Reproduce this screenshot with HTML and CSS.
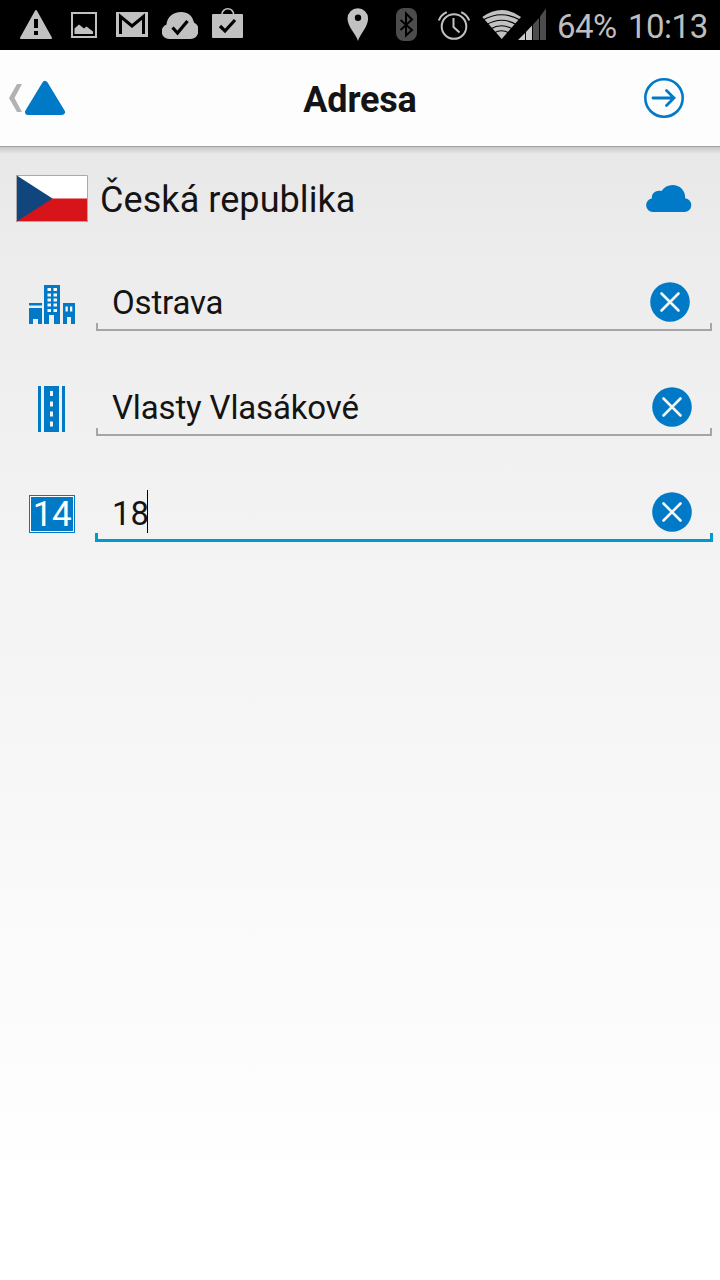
FILE: index.html
```html
<!DOCTYPE html>
<html lang="cs">
  <head>
    <meta charset="UTF-8" />
    <meta name="viewport" content="width=device-width, initial-scale=1.0" />
    <title>Adresa</title>
    <link rel="stylesheet" href="styles.css">
  </head>
  <body>
    <main class="app">
      <div class="status-bar">
        <div class="notifications">
          <svg width="32" height="50" viewBox="20 0 32 50">
            <path d="M36 11L51 38H21z" fill="#c1c1c1" stroke="#c1c1c1" stroke-width="2" stroke-linejoin="round" />
            <path d="M34 19h4v9h-4zM34 31h4v4h-4z" fill="#000" />
          </svg>
          <svg width="26" height="50" viewBox="71 0 26 50">
            <path d="M72 13h24v24H72z" fill="none" stroke="#c1c1c1" stroke-width="2" />
            <path d="M74.500 34v-5.500l4.500-4 5 4 2.500-2 6.500 5V34z" fill="#c1c1c1" />
          </svg>
          <svg width="32" height="50" viewBox="116 0 32 50">
            <path d="M116 12h32v25h-32z" fill="#c1c1c1" />
            <path d="M120.500 34V16.500L132 26l11.500-9.500V34" fill="none" stroke="#000" stroke-width="3" />
          </svg>
          <svg width="36" height="50" viewBox="162 0 36 50">
            <path d="M169 39a7.500 7.500 0 0 1-2.500-14.500C167 17 173 12 181 12c7 0 11.500 4 13 10.500a8.800 8.800 0 0 1-3.500 16.500z" fill="#c1c1c1" />
            <path d="M172.500 27.500l5 5.500 10-12" fill="none" stroke="#000" stroke-width="3.200" />
          </svg>
          <svg width="31" height="50" viewBox="212 0 31 50">
            <path d="M222 16v-1.500a5.800 5.800 0 0 1 11.600 0V16" fill="none" stroke="#c1c1c1" stroke-width="1.600" />
            <rect x="212" y="14" width="31" height="24" rx="1" fill="#c1c1c1" />
            <path d="M220 26l5 5 10-11" fill="none" stroke="#000" stroke-width="3.200" />
          </svg>
        </div>
        <div class="indicators">
          <svg width="22" height="50" viewBox="347 0 22 50">
            <path fill-rule="evenodd" d="M358 41C356 34 347.500 27 347.500 18.500a10.300 10.300 0 0 1 20.600 0C368.100 27 360 34 358 41zM358 14.500a3.200 3.200 0 1 0 0 6.400 3.200 3.200 0 0 0 0-6.400z" fill="#c1c1c1" />
          </svg>
          <svg width="21" height="50" viewBox="396 0 21 50">
            <rect x="396" y="8" width="21" height="33" rx="8" fill="#4c4c4c" />
            <path d="M400.500 20L412 30l-6 5.500V13.500l6 6L400.500 30" fill="none" stroke="#000" stroke-width="2" />
          </svg>
          <svg width="32" height="50" viewBox="438 0 32 50">
            <g fill="none" stroke="#c1c1c1" stroke-width="2">
              <circle cx="454" cy="26.500" r="12.300" />
              <path d="M453.500 18v9l6 5.500M438.800 20.500q2-5.500 8-8.300M469.200 20.500q-2-5.500-8-8.300" />
            </g>
          </svg>
          <svg class="wifi" width="39" height="50" viewBox="482 0 39 50">
            <path d="M501.700 39L482.300 17Q501.700 3 521 17z" fill="#c1c1c1" />
            <path d="M482 20.500q19.500-11.500 39 0M486 25q15.500-9.500 31 0M490.500 29q11-6.500 22 0M494 33q7.500-4.500 15 0" fill="none" stroke="#000" stroke-width="1.200" />
          </svg>
          <svg class="signal" width="28" height="50" viewBox="518 0 28 50">
            <path d="M518 40l7-7v7zM526 32l6-6.500V40h-6z" fill="#c8c8c8" />
            <path d="M533 24.500l6-6.500v22h-6zM540 16.500l6-8V40h-6z" fill="#4c4c4c" />
          </svg>
          <span class="battery">64%</span>
          <span class="clock">10:13</span>
        </div>
      </div>
      <header class="header">
        <a class="back">
          <svg width="58" height="36" viewBox="8 80 58 36">
            <path d="M17 84h5l-7.500 14L22 112h-5L9 98z" fill="#b2b2b2" />
            <path d="M45 84L62 112H28z" fill="#007ac6" stroke="#007ac6" stroke-width="6" stroke-linejoin="round" />
          </svg>
        </a>
        <h1 class="title">Adresa</h1>
        <a class="next">
          <svg width="40" height="40" viewBox="0 0 40 40" fill="none" stroke="#007ac6">
            <circle cx="20" cy="20" r="18.700" stroke-width="2.600" />
            <path d="M9 20h21M22.500 12.500L30 20l-7.500 7.500" stroke-width="2.800" stroke-linecap="round" />
          </svg>
        </a>
      </header>
      <section class="content">
        <div class="country">
          <svg class="flag" width="72" height="47" viewBox="0 0 72 47">
            <path d="M0 0h72v24H0z" fill="#fff" />
            <path d="M0 23.500h72V47H0z" fill="#d7141a" />
            <path d="M0 0l36.500 23.500L0 47z" fill="#11457e" />
            <path d="M.5.500h71v46H.5z" fill="none" stroke="#aaa" />
          </svg>
          <span class="country-name">Česká republika</span>
          <svg class="cloud" width="46" height="27" viewBox="0 0 46 27">
            <path d="M6.800 27a6.800 6.800 0 0 1-1-13.500C5.500 8 10 4.500 15.500 6 18 2 22 0 26.500 0 34 0 39.500 5.500 39.200 13.300A6.900 6.900 0 0 1 39.200 27z" fill="#007ac6" />
          </svg>
        </div>
        <div class="field">
          <div class="field-icon">
            <svg width="46" height="39" viewBox="0 0 46 39">
              <g fill="#007ac6">
                <path d="M0 18h13v2.500H0zM0 23h13v16H9v-5H4v5H0zM15 0h16v39h-6v-9h-5v9h-5zM34 18h12v21h-4v-7h-4v7h-4z" />
              </g>
              <g fill="#f4f8fb">
                <path d="M18.500 3H22v3h-3.500zM24.500 3H28v3h-3.500zM18.500 8.500H22v3h-3.500zM24.500 8.500H28v3h-3.500zM18.500 13.500H22v3h-3.500zM24.500 13.500H28v3h-3.500zM18.500 18.500H22v3h-3.500zM24.500 18.500H28v3h-3.500zM18.500 24H22v3h-3.500zM24.500 24H28v3h-3.500zM36.500 21.500h2.300v5h-2.300zM41 21.500h2.300v5H41z" />
              </g>
            </svg>
          </div>
          <div class="field-input">
            <span class="value">Ostrava</span>
            <svg class="clear first" width="40" height="40" viewBox="0 0 40 40">
              <circle cx="20" cy="20" r="19.800" fill="#007ac6" />
              <path d="M11.500 11.500l17 17M28.500 11.500l-17 17" stroke="#f4f4f4" stroke-width="2.600" stroke-linecap="round" />
            </svg>
          </div>
        </div>
        <div class="field">
          <div class="field-icon street">
            <svg width="27" height="46" viewBox="0 0 27 46">
              <path d="M0 0h3v46H0zM6 0h15v46H6zM24 0h3v46h-3z" fill="#007ac6" />
              <path d="M12 5h3v5h-3zM12 15.500h3v5h-3zM12 25.500h3v5h-3zM12 35.500h3v5h-3z" fill="#f4f4f4" />
            </svg>
          </div>
          <div class="field-input">
            <span class="value">Vlasty Vlasákové</span>
            <svg class="clear" width="40" height="40" viewBox="0 0 40 40">
              <circle cx="20" cy="20" r="19.800" fill="#007ac6" />
              <path d="M11.500 11.500l17 17M28.500 11.500l-17 17" stroke="#f4f4f4" stroke-width="2.600" stroke-linecap="round" />
            </svg>
          </div>
        </div>
        <div class="field">
          <div class="field-icon number">
            <div class="house-number">14</div>
          </div>
          <div class="field-input focused">
            <span class="value">18</span>
            <span class="caret"></span>
            <svg class="clear" width="40" height="40" viewBox="0 0 40 40">
              <circle cx="20" cy="20" r="19.800" fill="#007ac6" />
              <path d="M11.500 11.500l17 17M28.500 11.500l-17 17" stroke="#f4f4f4" stroke-width="2.600" stroke-linecap="round" />
            </svg>
          </div>
        </div>
      </section>
    </main>
  </body>
</html>
```
FILE: styles.css
```css
* {
  box-sizing: border-box;
  margin: 0;
  padding: 0;
}
:root {
  --blue: #007ac6;
  --focus: #0099cc;
  --line: #a5a5a5;
  --text: #141414;
}
body {
  font-family: Roboto, sans-serif;
  color: var(--text);
}
svg {
  display: block;
  flex: none;
}
.app {
  display: flex;
  flex-direction: column;
  width: 720px;
  height: 1280px;
  overflow: hidden;
}
/*Status bar*/
.status-bar {
  display: flex;
  justify-content: space-between;
  height: 50px;
  padding: 0 12px 0 20px;
  background: #000;
  color: #bebebe;
}
.notifications {
  display: flex;
  gap: 19px;
}
.notifications svg:nth-child(3) {
  margin-right: -5px;
}
.notifications svg:nth-child(4) {
  margin-right: -5px;
}
.indicators {
  display: flex;
  font-size: 33px;
  letter-spacing: -0.5px;
  line-height: 53px;
}
.indicators svg {
  margin-right: 21px;
}
.indicators svg:first-child {
  margin-right: 27px;
}
.indicators .wifi {
  margin-left: -9px;
  margin-right: -3px;
}
.indicators .signal {
  margin-right: 11px;
}
.battery {
  width: 71px;
}
.clock {
  width: 80px;
}
/*Header*/
.header {
  display: flex;
  justify-content: space-between;
  align-items: center;
  height: 97px;
  padding: 0 36px 0 8px;
  background: #fdfdfd;
  border-bottom: 1px solid #a2a4a3;
}
.back {
  width: 68px;
}
.next {
  width: 40px;
}
.title {
  padding-top: 3px;
  font-size: 36px;
  font-weight: bold;
  letter-spacing: -0.2px;
  line-height: 42px;
}
/*Form*/
.content {
  flex: 1;
  background: linear-gradient(rgba(0, 0, 0, 0.14), rgba(0, 0, 0, 0) 7px),
    linear-gradient(#e8e8e8, #ececec 9%, #f1f1f1 27%, #fff 92%);
}
.country {
  display: flex;
  align-items: center;
  height: 103px;
  padding: 0 28px 0 16px;
}
.country-name {
  flex: 1;
  margin-left: 12px;
  padding-top: 2px;
  font-size: 36px;
  letter-spacing: 0.07px;
}
.field {
  display: flex;
  height: 81px;
  margin-bottom: 24px;
}
.field-icon {
  display: flex;
  justify-content: center;
  align-items: center;
  width: 96px;
  padding: 28px 0 0 8px;
  height: 81px;
}
.field-icon.street {
  padding: 26px 0 0 7px;
}
.field-icon.number {
  padding-top: 26px;
}
.field-input {
  position: relative;
  display: flex;
  align-items: center;
  width: 616px;
  padding: 24px 20px 0 16px;
  border-bottom: 2px solid var(--line);
}
.field-input::before,
.field-input::after {
  content: "";
  position: absolute;
  bottom: 0;
  width: 2px;
  height: 6px;
  background: var(--line);
}
.field-input::before {
  left: 0;
}
.field-input::after {
  right: 0;
}
.field-input.focused {
  width: 618px;
  height: 82px;
  margin-left: -1px;
  padding: 25px 21px 0 17px;
  border-bottom: 3px solid var(--focus);
}
.field-input.focused::before,
.field-input.focused::after {
  width: 3px;
  background: var(--focus);
}
.value {
  padding-top: 2px;
  font-size: 33px;
  letter-spacing: -0.15px;
}
.clear {
  margin-left: auto;
}
.clear.first {
  margin-right: 2px;
}
.caret {
  width: 1px;
  height: 43px;
  margin: -2px 0 0 -2px;
  background: #000;
}
.house-number {
  width: 46px;
  height: 38px;
  border: 1px solid var(--blue);
  outline: 1px solid #fff;
  outline-offset: -2px;
  background: var(--blue);
  color: #fff;
  font-size: 35px;
  letter-spacing: -0.5px;
  line-height: 38px;
  text-align: center;
}
```
